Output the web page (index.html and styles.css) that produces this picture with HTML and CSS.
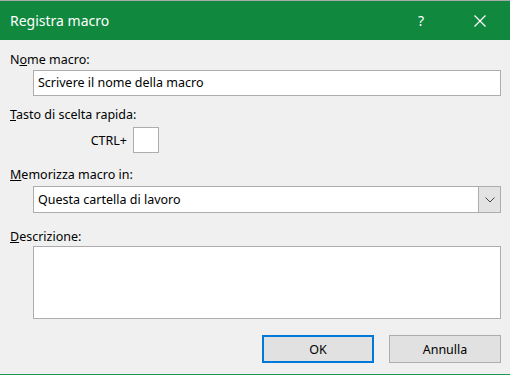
FILE: index.html
```html
<!DOCTYPE html>
<html lang="it">
    <head>
        <title>Registra macro</title>
        <link rel="stylesheet" href="styles.css">
    </head>
    <body>
        <div class="dialog">
            <div class="titlebar">
                <span class="title">Registra macro</span>
                <span class="help">?</span>
                <span class="close">
                    <svg width="12" height="12" viewBox="0 0 12 12">
                        <path d="M0.5 0.5 L11.5 11.5 M11.5 0.5 L0.5 11.5" stroke="#fff" stroke-width="1.2" fill="none"/>
                    </svg>
                </span>
            </div>

            <div class="content">
                <div class="label">N<u>o</u>me macro:</div>
                <div class="field text-field">Scrivere il nome della macro</div>

                <div class="label label-shortcut"><u>T</u>asto di scelta rapida:</div>
                <div class="shortcut-row">
                    <span class="ctrl">CTRL+</span>
                    <span class="key-box"></span>
                </div>

                <div class="label label-store"><u>M</u>emorizza macro in:</div>
                <div class="field select-field">
                    <span class="select-text">Questa cartella di lavoro</span>
                    <span class="select-btn">
                        <svg width="10" height="6" viewBox="0 0 10 6">
                            <path d="M0.5 0.5 L5 5 L9.5 0.5" stroke="#444" stroke-width="1" fill="none"/>
                        </svg>
                    </span>
                </div>

                <div class="label label-desc"><u>D</u>escrizione:</div>
                <div class="field textarea-field"></div>

                <div class="buttons">
                    <button class="btn btn-default">OK</button>
                    <button class="btn">Annulla</button>
                </div>
            </div>
        </div>
    </body>
</html>
```

FILE: styles.css
```css
html, body {
    margin: 0;
    padding: 0;
}
body {
    background: #f0f0f0;
    font-family: "Noto Sans", "Open Sans", Arial, sans-serif;
    font-size: 12.5px;
    color: #000;
}
.dialog {
    width: 510px;
    height: 375px;
    box-sizing: border-box;
    border-bottom: 1px solid #1e9a50;
    display: flex;
    flex-direction: column;
}
.titlebar {
    height: 39px;
    border-top: 1px solid #a9a9a9;
    background: #10893e;
    color: #fff;
    display: flex;
    align-items: center;
    padding-left: 10px;
}
.title {
    font-size: 14px;
    flex: 1;
    margin-top: -1px;
}
.help {
    font-size: 14px;
    width: 14px;
    text-align: center;
    margin-right: 46px;
    margin-top: -1px;
}
.close {
    display: flex;
    margin-right: 24px;
    margin-top: 1px;
}
.content {
    padding: 12px 9px 0 10px;
    display: flex;
    flex-direction: column;
}
.label {
    line-height: 16px;
    height: 16px;
}
.field {
    background: #fff;
    border: 1px solid #adadad;
    box-sizing: border-box;
    margin-left: 23px;
}
.text-field {
    height: 26px;
    margin-top: 2px;
    padding-left: 4px;
    line-height: 24px;
}
.label-shortcut {
    margin-top: 11px;
}
.shortcut-row {
    display: flex;
    align-items: center;
    gap: 6px;
    margin-top: 4px;
    margin-left: 77px;
}
.ctrl {
    width: 40px;
    text-align: right;
}
.key-box {
    width: 26px;
    height: 26px;
    box-sizing: border-box;
    background: #fff;
    border: 1px solid #adadad;
}
.label-store {
    margin-top: 14px;
}
.select-field {
    height: 27px;
    margin-top: 3px;
    display: flex;
}
.select-text {
    flex: 1;
    padding-left: 4px;
    line-height: 25px;
}
.select-btn {
    width: 21px;
    background: #e3e3e3;
    border-left: 1px solid #adadad;
    display: flex;
    align-items: center;
    justify-content: center;
}
.label-desc {
    margin-top: 16px;
}
.textarea-field {
    height: 73px;
    margin-top: 1px;
}
.buttons {
    display: flex;
    justify-content: flex-end;
    gap: 15px;
    margin-top: 16px;
}
.btn {
    width: 112px;
    height: 28px;
    box-sizing: border-box;
    background: #e1e1e1;
    border: 1px solid #adadad;
    font-family: inherit;
    font-size: 12.5px;
    color: #000;
    padding: 0;
}
.btn-default {
    border: 2px solid #0078d7;
}
```
